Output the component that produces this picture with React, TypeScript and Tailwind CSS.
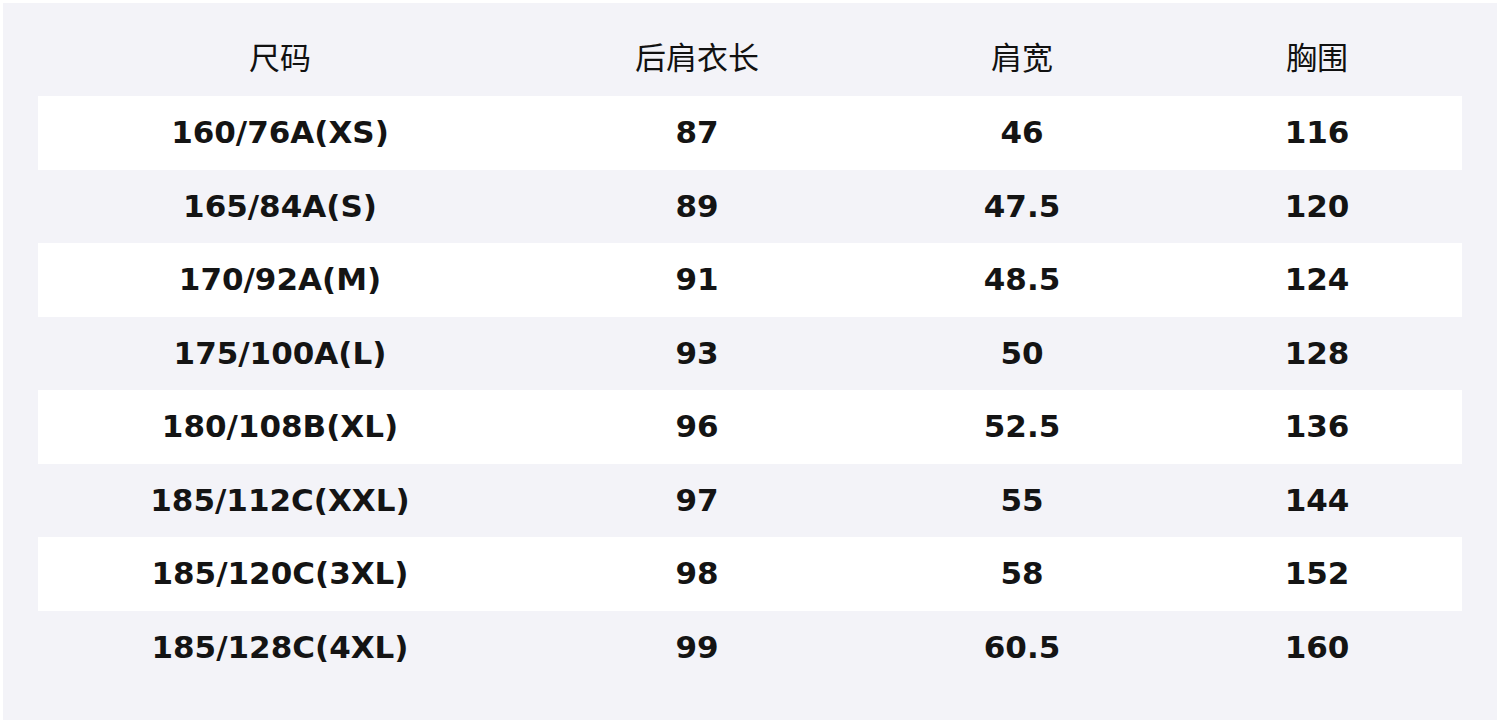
import React from "react";

const headers = ["尺码", "后肩衣长", "肩宽", "胸围"];
const rows = [
  ["160/76A(XS)", "87", "46", "116"],
  ["165/84A(S)", "89", "47.5", "120"],
  ["170/92A(M)", "91", "48.5", "124"],
  ["175/100A(L)", "93", "50", "128"],
  ["180/108B(XL)", "96", "52.5", "136"],
  ["185/112C(XXL)", "97", "55", "144"],
  ["185/120C(3XL)", "98", "58", "152"],
  ["185/128C(4XL)", "99", "60.5", "160"],
];

const grid = "grid grid-cols-[484px_350px_300px_290px]";

export default function App() {
  return (
    <div className="w-[1500px] h-[723px] bg-white p-[3px] overflow-hidden">
      <div className="w-full h-[717px] bg-[#f3f3f8] pt-[19px] pl-[35px] pr-[35px]">
        <div
          className={`${grid} h-[74px] pb-[6px] items-center text-[31px] text-[#111111]`}
          style={{ fontFamily: '"Noto Sans CJK SC", "Noto Sans", sans-serif' }}
        >
          {headers.map((h) => (
            <div key={h} className="text-center">
              {h}
            </div>
          ))}
        </div>
        {rows.map((r, i) => (
          <div
            key={i}
            className={`${grid} h-[73.5px] items-center text-[31px] font-bold text-[#141414] ${
              i % 2 === 0 ? "bg-white" : ""
            }`}
            style={{ fontFamily: '"DejaVu Sans", sans-serif' }}
          >
            {r.map((c, j) => (
              <div key={j} className="text-center leading-none">
                {c}
              </div>
            ))}
          </div>
        ))}
      </div>
    </div>
  );
}
